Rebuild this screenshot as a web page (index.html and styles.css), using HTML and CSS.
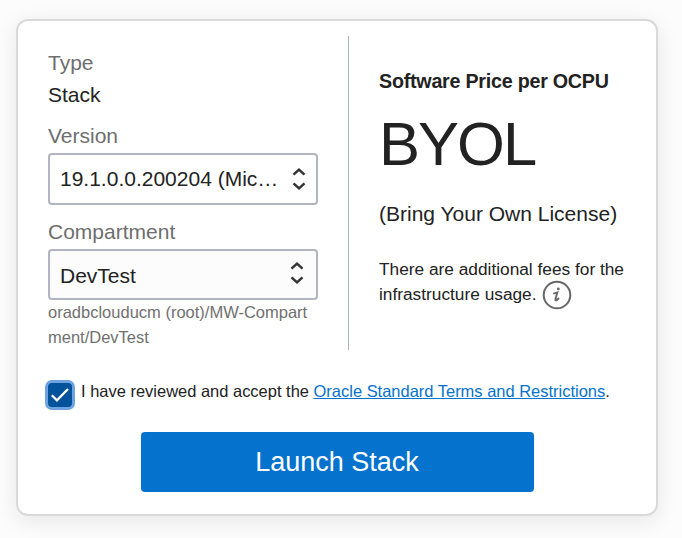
FILE: index.html
```html
<!DOCTYPE html>
<html lang="en">
<head>
<meta charset="utf-8">
<title>Launch Stack</title>
<link rel="stylesheet" href="styles.css">
</head>
<body>
<main class="card">
  <div class="columns">
    <section class="config">
      <div class="label">Type</div>
      <div class="value">Stack</div>
      <div class="label field-label">Version</div>
      <div class="select">
        <span class="select-text">19.1.0.0.200204 (Mic…</span>
        <svg class="arrows" width="16" height="24" viewBox="0 0 16 24"><path d="M2.500 7.700 8 2.600 13.500 7.700M2.500 16.300 8 21.400 13.500 16.300"/></svg>
      </div>
      <div class="label field-label compartment-label">Compartment</div>
      <div class="select compartment">
        <span class="select-text">DevTest</span>
        <svg class="arrows" width="16" height="24" viewBox="0 0 16 24"><path d="M2.500 7.700 8 2.600 13.500 7.700M2.500 16.300 8 21.400 13.500 16.300"/></svg>
      </div>
      <div class="path">oradbclouducm (root)/MW-Compart<br>ment/DevTest</div>
    </section>
    <section class="pricing">
      <div class="price-title">Software Price per OCPU</div>
      <div class="price">BYOL</div>
      <div class="price-note">(Bring Your Own License)</div>
      <div class="fees">There are additional fees for the<br>infrastructure usage. <svg class="info" width="30" height="30" viewBox="0 0 30 30"><circle cx="15" cy="15" r="13.3"/><path class="info-stem" d="M12 13.400c1.200-.3 2.300-.7 3.400-1.100l-2 7c-.3 1.500 1.100 1.300 3.100-.8"/><circle class="info-dot" cx="16.300" cy="8.900" r="1.400"/></svg></div>
    </section>
  </div>
  <div class="terms">
    <span class="checkbox"><svg width="20" height="16" viewBox="0 0 20 16"><path d="M1.800 8.300 6.900 13.300 18 2"/></svg></span>
    <span class="terms-text">I have reviewed and accept the <a href="#">Oracle Standard Terms and Restrictions</a>.</span>
  </div>
  <button class="launch" type="button">Launch Stack</button>
</main>
</body>
</html>
```
FILE: styles.css
```css
* {
  box-sizing: border-box;
}

body {
  margin: 0;
  height: 538px;
  padding: 19px 24px 22px 16px;
  overflow: hidden;
  background: #fcfcfc;
  color: #222;
  font-family: "Liberation Sans", Arial, sans-serif;
}

.card {
  height: 497px;
  padding-top: 15px;
  background: #fff;
  border: 2px solid #d9d9d9;
  border-radius: 12px;
  box-shadow: 0 5px 22px rgba(0, 0, 0, 0.09);
}

.columns {
  display: flex;
  height: 314px;
  white-space: nowrap;
}

.config {
  width: 331px;
  padding: 11px 30px 0;
  border-right: 1px solid #aeb4be;
}

.label,
.value {
  height: 32px;
  font-size: 21px;
  line-height: 32px;
}

.label {
  color: #6e6e6e;
}

.field-label {
  margin: 9px 0 1px;
}

.compartment-label {
  margin-top: 11px;
}

.select {
  display: flex;
  align-items: center;
  justify-content: space-between;
  height: 52px;
  padding: 0 9px 0 10px;
  border: 2px solid #b0b5c1;
  border-radius: 4px;
  font-size: 21px;
}

.compartment {
  height: 51px;
  padding-right: 11px;
  background: #fcfcfc;
}

.compartment .select-text {
  padding-top: 3px;
}

.compartment .arrows {
  margin-bottom: 3px;
}

.arrows {
  fill: none;
  stroke: #333;
  stroke-width: 2.500;
}

.path {
  color: #707070;
  font-size: 16.500px;
  line-height: 25px;
}

.pricing {
  padding: 30px 0 0 30px;
}

.price-title {
  font-size: 19.700px;
  font-weight: bold;
  line-height: 30px;
  letter-spacing: -0.240px;
}

.price {
  margin-top: 13px;
  font-size: 61.500px;
  line-height: 70px;
  letter-spacing: -2px;
}

.price-note {
  margin-top: 19px;
  font-size: 21px;
  line-height: 32px;
}

.fees {
  margin-top: 27px;
  font-size: 17.300px;
  line-height: 25px;
}

.info {
  position: relative;
  top: -2px;
  margin: 0 0 -10px 1px;
  vertical-align: top;
  fill: none;
  stroke: #686868;
  stroke-width: 2;
}

.info-stem {
  stroke-width: 1.900;
  stroke-linecap: round;
}

.info-dot {
  fill: #686868;
  stroke: none;
}

.terms {
  display: flex;
  height: 30px;
  margin: 30px 0 0 27px;
  white-space: nowrap;
}

.checkbox {
  display: flex;
  align-items: center;
  justify-content: center;
  width: 30px;
  height: 30px;
  background: #00529b;
  border: 3px solid #6fa2e1;
  border-radius: 7px;
}

.checkbox path {
  fill: none;
  stroke: #fff;
  stroke-width: 2.300;
}

.terms-text {
  margin-left: 6px;
  font-size: 16.480px;
  line-height: 22px;
}

.terms-text a {
  color: #0572ce;
  text-decoration-thickness: 1px;
  text-underline-offset: 1px;
}

.launch {
  display: block;
  width: 393px;
  height: 60px;
  margin: 22px 0 0 123px;
  padding: 1px 1px 0 0;
  border: 0;
  border-radius: 4px;
  background: #0572ce;
  color: #fff;
  font-family: inherit;
  font-size: 27px;
}
```
